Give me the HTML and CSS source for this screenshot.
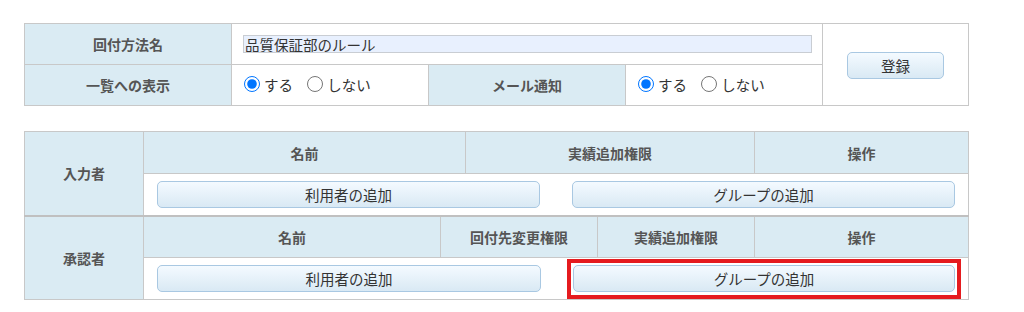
FILE: index.html
```html
<!DOCTYPE html>
<html lang="ja">
<head>
  <meta charset="UTF-8">
  <title>回付方法</title>
  <link rel="stylesheet" href="styles.css">
</head>
<body>
  <div class="page">

    <!-- 回付方法の基本設定 -->
    <table class="grid settings">
      <colgroup>
        <col class="c-label">
        <col class="c-mid">
        <col class="c-mid">
        <col class="c-mid">
        <col class="c-btn">
      </colgroup>
      <tr>
        <th>回付方法名</th>
        <td colspan="3" class="name-cell">
          <input class="name-input" type="text" value="品質保証部のルール">
        </td>
        <td rowspan="2" class="submit-cell">
          <button class="btn btn-submit" type="button">登録</button>
        </td>
      </tr>
      <tr>
        <th>一覧への表示</th>
        <td class="radio-cell">
          <label><input type="radio" name="list" checked>する</label>
          <label><input type="radio" name="list">しない</label>
        </td>
        <th>メール通知</th>
        <td class="radio-cell">
          <label><input type="radio" name="mail" checked>する</label>
          <label><input type="radio" name="mail">しない</label>
        </td>
      </tr>
    </table>

    <!-- 入力者・承認者 -->
    <table class="grid members">
      <colgroup>
        <col class="m-label">
        <col class="m-name">
        <col class="m-gap">
        <col class="m-perm1">
        <col class="m-perm2">
        <col class="m-op">
      </colgroup>
      <tr>
        <th rowspan="2">入力者</th>
        <th colspan="2">名前</th>
        <th colspan="2">実績追加権限</th>
        <th>操作</th>
      </tr>
      <tr>
        <td colspan="5" class="btn-row">
          <div class="btn-pair">
            <button class="btn" type="button">利用者の追加</button>
            <button class="btn" type="button">グループの追加</button>
          </div>
        </td>
      </tr>
      <tr class="group-start">
        <th rowspan="2">承認者</th>
        <th>名前</th>
        <th colspan="2">回付先変更権限</th>
        <th>実績追加権限</th>
        <th>操作</th>
      </tr>
      <tr>
        <td colspan="5" class="btn-row">
          <div class="btn-pair">
            <button class="btn" type="button">利用者の追加</button>
            <div class="highlight">
              <button class="btn" type="button">グループの追加</button>
            </div>
          </div>
        </td>
      </tr>
    </table>

  </div>
</body>
</html>
```

FILE: styles.css
```css
html, body {
  margin: 0;
  padding: 0;
  background: #fff;
  font-family: "Noto Sans CJK JP", "Noto Sans", sans-serif;
  color: #333;
}

.page {
  padding: 23px 24px;
  width: 944px;
}

.grid {
  width: 944px;
  border-collapse: collapse;
  table-layout: fixed;
}

.grid th,
.grid td {
  border: 1px solid #c8c8c8;
  padding: 0;
  font-size: 14px;
}

.grid th {
  background: #daebf3;
  color: #555;
  font-weight: bold;
  text-align: center;
}

.grid td {
  background: #fff;
}

/* settings table */
.settings tr {
  height: 41px;
}

.c-label { width: 207px; }
.c-mid { width: 197px; }
.c-btn { width: 146px; }

.name-cell {
  padding: 0 10px 0 11px !important;
}

.name-input {
  display: block;
  box-sizing: border-box;
  width: 569px;
  height: 18px;
  margin: 0;
  padding: 0 1px;
  border: 1px solid #c9cdd3;
  background: #e8f0fe;
  font-family: inherit;
  font-size: 14.5px;
  color: #333;
}

.radio-cell {
  padding-left: 11px !important;
}

.radio-cell label {
  display: inline-flex;
  align-items: center;
  margin-right: 10px;
  font-size: 14.5px;
  color: #333;
}

.radio-cell input {
  width: 16px;
  height: 16px;
  margin: 0 4px 0 1px;
}

.submit-cell {
  text-align: center;
}

/* buttons */
.btn {
  box-sizing: border-box;
  height: 27px;
  border: 1px solid #a9c8e2;
  border-radius: 5px;
  background: linear-gradient(to bottom, #f4faff, #d9e9f4);
  font-family: inherit;
  font-size: 14.5px;
  color: #333;
  padding: 0;
}

.btn-submit {
  width: 97px;
  margin-top: 2px;
}

/* members table */
.members {
  margin-top: 25px;
}

.members tr {
  height: 42px;
}

.m-label { width: 119px; }
.m-name { width: 297px; }
.m-gap { width: 25px; }
.m-perm1 { width: 132px; }
.m-perm2 { width: 157px; }
.m-op { width: 214px; }

.group-start th {
  border-top: 2px solid #c0c0c0;
}

.btn-row {
  padding: 0 13px !important;
}

.btn-pair {
  display: flex;
  gap: 32px;
}

.btn-pair > * {
  flex: 1;
}

/* red annotation frame */
.highlight {
  display: flex;
  margin: -6px -6px -7px -6px;
  padding: 2px 2px 3px 2px;
  border: 4px solid #e51b1f;
}

.highlight .btn {
  flex: 1;
}
```
